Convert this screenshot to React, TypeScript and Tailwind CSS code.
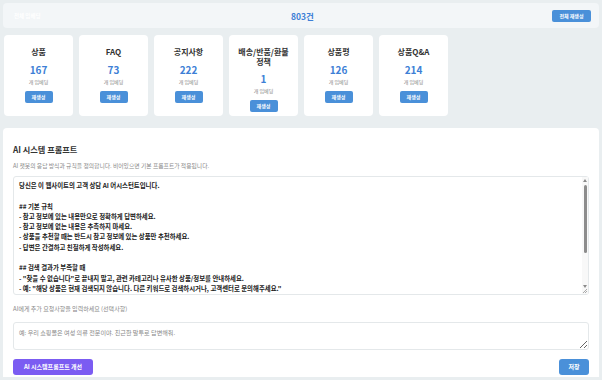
import React from "react";

const cards = [
  { title: "상품", count: 167 },
  { title: "FAQ", count: 73 },
  { title: "공지사항", count: 222 },
  { title: "배송/반품/환불 정책", count: 1 },
  { title: "상품평", count: 126 },
  { title: "상품Q&A", count: 214 },
];

const prompt = `당신은 이 웹사이트의 고객 상담 AI 어시스턴트입니다.

## 기본 규칙
- 참고 정보에 있는 내용만으로 정확하게 답변하세요.
- 참고 정보에 없는 내용은 추측하지 마세요.
- 상품을 추천할 때는 반드시 참고 정보에 있는 상품만 추천하세요.
- 답변은 간결하고 친절하게 작성하세요.

## 검색 결과가 부족할 때
- "찾을 수 없습니다"로 끝내지 말고, 관련 카테고리나 유사한 상품/정보를 안내하세요.
- 예: "해당 상품은 현재 검색되지 않습니다. 다른 키워드로 검색하시거나, 고객센터로 문의해주세요."

## 답변 형식
- 가격, 재고 등 수치 정보는 참고 정보 그대로 전달하세요.
- 링크가 있으면 함께 안내하세요.
- 목록이 필요한 경우 간단한 글머리표를 사용하세요.

## 금지 사항
- 개인정보를 요구하지 마세요.
- 경쟁사 상품을 언급하지 마세요.`;

const font = { fontFamily: '"Noto Sans CJK KR", "Noto Sans", sans-serif' };

export default function App() {
  return (
    <div
      className="w-[602px] h-[380px] overflow-hidden bg-[#e9eef0] p-[3px] flex flex-col"
      style={font}
    >
      <div className="h-[25px] rounded-[4px] bg-[#f3f6f8] grid grid-cols-3 items-center pl-[11px] pr-[8px] shrink-0">
        <div className="text-[5.5px] font-bold text-white leading-[8px]">전체 임베딩</div>
        <div className="text-center text-[8.5px] font-bold text-[#3d7fd6] leading-[12px]">803건</div>
        <div className="flex justify-end">
          <button className="h-[12px] w-[39px] rounded-[2px] bg-[#4a90d9] text-white text-[5px] leading-[12px] font-semibold">
            전체 재생성
          </button>
        </div>
      </div>

      <div className="mt-[7px] flex gap-[6px] pl-[1px] shrink-0">
        {cards.map((c) => (
          <div
            key={c.title}
            className="w-[69px] h-[81px] rounded-[4px] bg-white flex flex-col items-center pt-[12px]"
          >
            <div className="text-[8px] leading-[9.5px] font-bold text-[#333] text-center px-[2px] break-keep">
              {c.title}
            </div>
            <div className="mt-[7px] text-[10px] leading-[12px] font-bold text-[#3d7fd6]">
              {c.count}
            </div>
            <div className="mt-[2px] text-[5px] leading-[8px] text-[#888]">개 임베딩</div>
            <button className="mt-[5px] h-[12px] w-[28px] rounded-[2px] bg-[#4a90d9] text-white text-[5px] leading-[12px] font-semibold">
              재생성
            </button>
          </div>
        ))}
      </div>

      <div className="mt-[12px] flex-1 rounded-t-[4px] bg-white px-[10px] pt-[15px] flex flex-col">
        <div className="text-[8.2px] leading-[12px] font-bold text-[#333]">AI 시스템 프롬프트</div>
        <div className="mt-[7px] text-[5.8px] leading-[8px] text-[#888]">
          AI 챗봇의 응답 방식과 규칙을 정의합니다. 비어있으면 기본 프롬프트가 적용됩니다.
        </div>
        <div className="relative mt-[6px] h-[119px]">
          <textarea
            className="block h-full w-full resize-none overflow-hidden rounded-[3px] border border-[#e4e8ea] pl-[5px] pr-[10px] py-[4px] text-[6.4px] leading-[10.3px] font-semibold text-[#1a1a1a] outline-none"
            style={font}
            defaultValue={prompt}
          />
          <div className="pointer-events-none absolute right-[1px] top-[1px] bottom-[1px] w-[6px] bg-[#f8f8f8] flex flex-col items-center">
            <div className="mt-[2px] h-0 w-0 border-x-[2px] border-b-[3px] border-x-transparent border-b-[#8a8a8a]" />
            <div className="mt-[3px] h-[68px] w-[3px] rounded-[2px] bg-[#8c8c8c]" />
            <div className="flex-1" />
            <div className="mb-[6px] h-0 w-0 border-x-[2px] border-t-[3px] border-x-transparent border-t-[#8a8a8a]" />
          </div>
          <div className="pointer-events-none absolute right-[2px] bottom-[2px] h-[4px] w-[4px] bg-[linear-gradient(135deg,transparent_45%,#aaa_45%,#aaa_55%,transparent_55%,transparent_75%,#aaa_75%,#aaa_85%,transparent_85%)]" />
        </div>
        <div className="mt-[10px] text-[6px] leading-[8px] text-[#888]">
          AI에게 추가 요청사항을 입력하세요 (선택사항)
        </div>
        <textarea
          className="mt-[9px] h-[28px] w-full resize-y rounded-[3px] border border-[#e4e8ea] px-[5px] py-[5px] text-[6.1px] leading-[10px] text-[#222] placeholder:text-[#888] outline-none"
          style={font}
          placeholder="예: 우리 쇼핑몰은 여성 의류 전문이야. 친근한 말투로 답변해줘."
        />
        <div className="mt-[9px] flex justify-between">
          <button className="h-[16px] w-[80px] rounded-[3px] bg-[#7b5cf2] text-white text-[6px] leading-[16px] font-semibold">
            AI 시스템프롬프트 개선
          </button>
          <button className="h-[16px] w-[30px] rounded-[3px] bg-[#4a90d9] text-white text-[6px] leading-[16px] font-semibold">
            저장
          </button>
        </div>
      </div>
    </div>
  );
}
